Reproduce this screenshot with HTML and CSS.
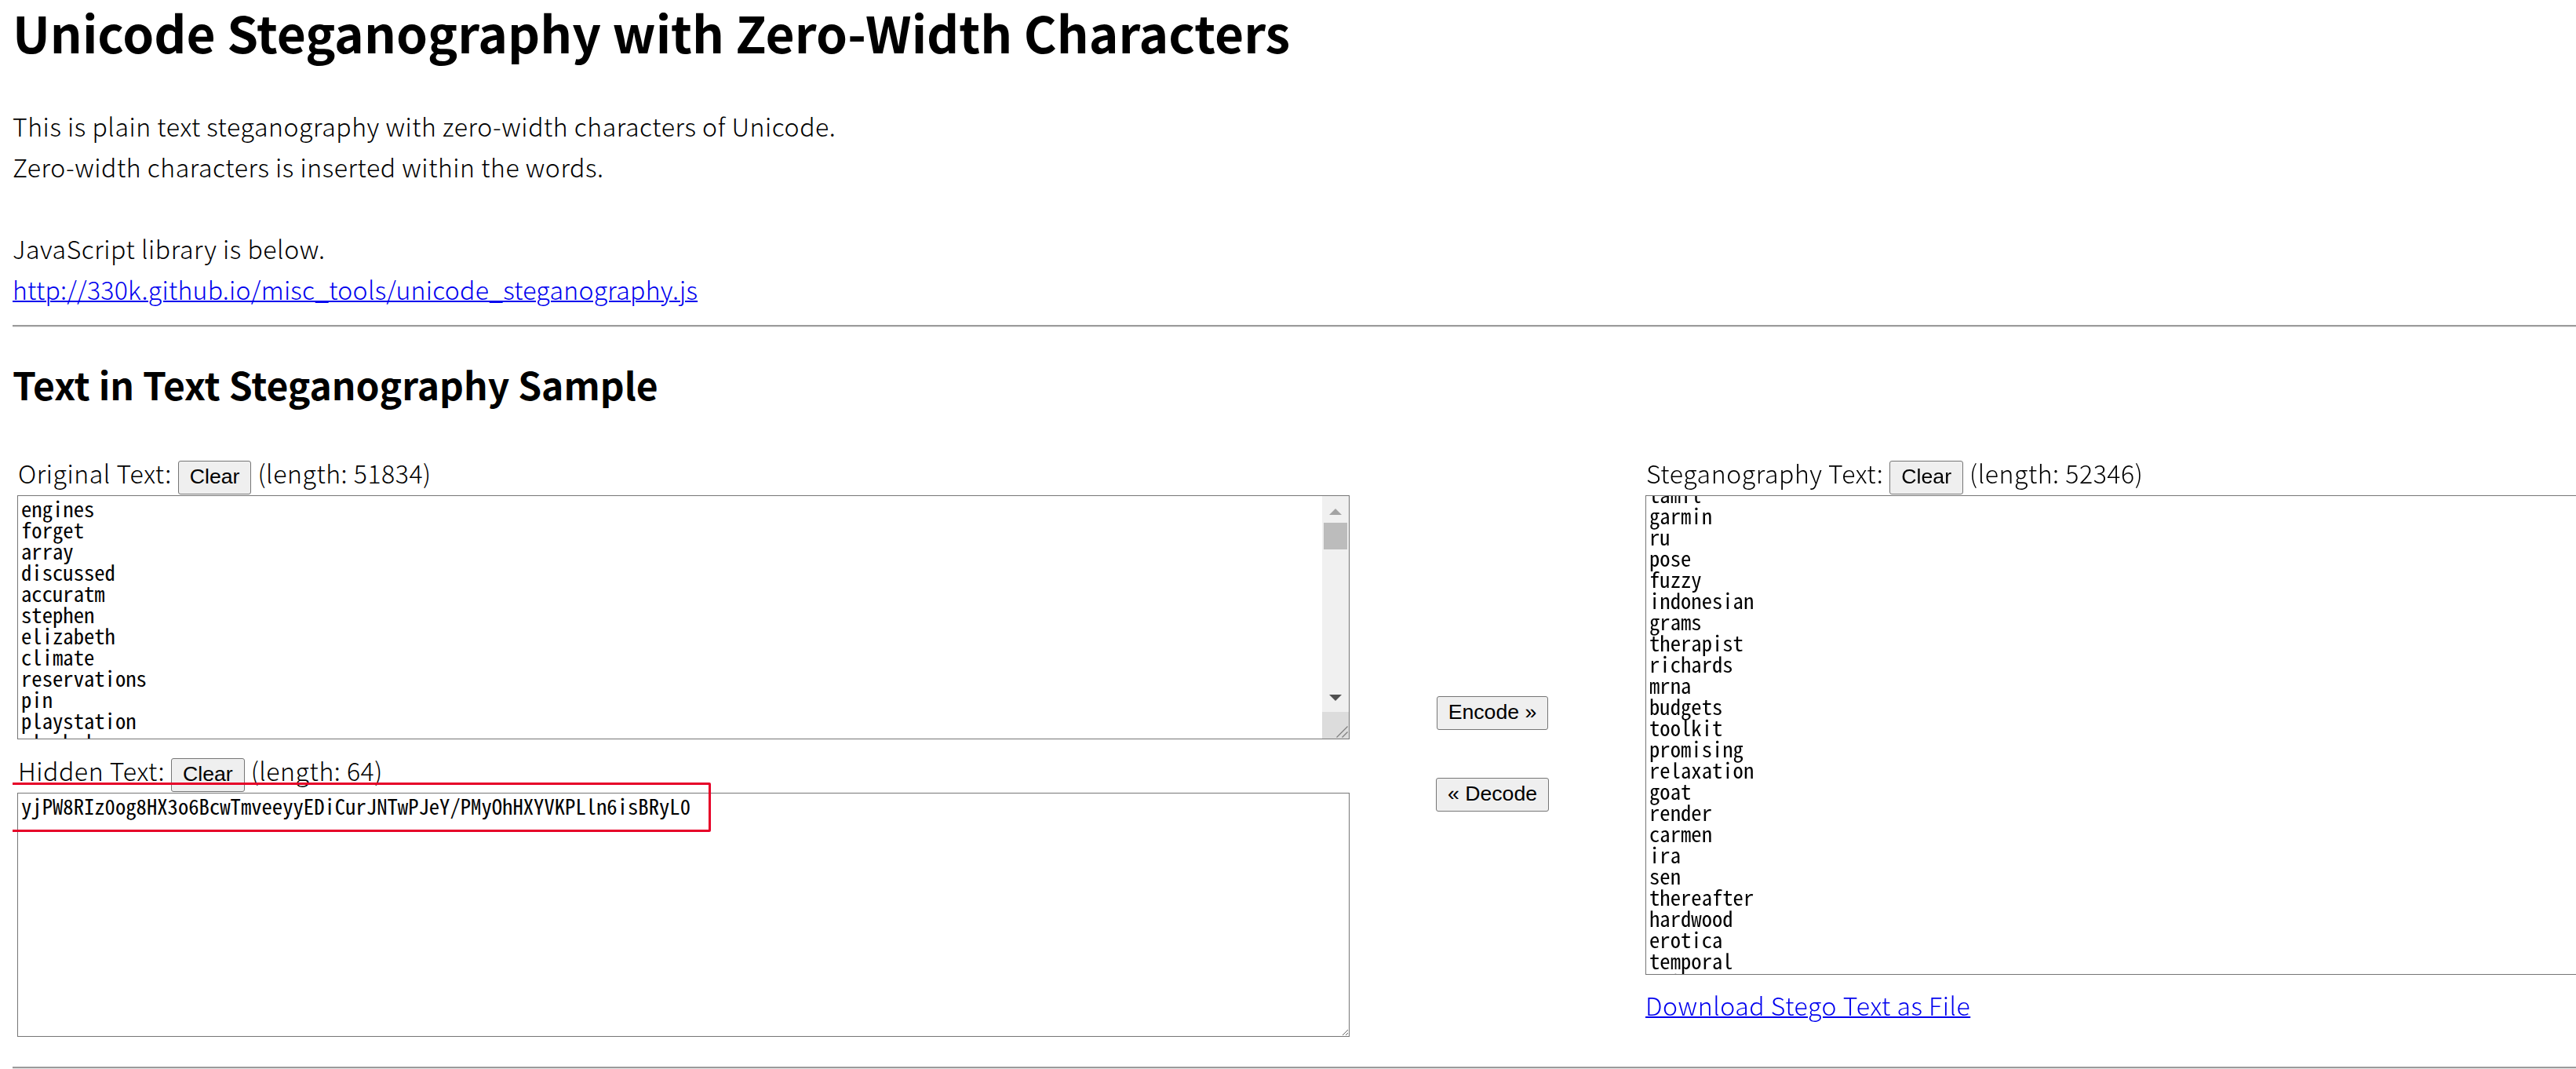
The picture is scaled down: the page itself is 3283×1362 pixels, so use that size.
FILE: index.html
```html
<!DOCTYPE html>
<html lang="en">
<head>
<meta charset="utf-8">
<title>Unicode Steganography with Zero-Width Characters</title>
<link rel="stylesheet" href="styles.css">
</head>
<body>
<h1 class="page-title">Unicode Steganography with Zero-Width Characters</h1>
<p class="intro">This is plain text steganography with zero-width characters of Unicode.<br>Zero-width characters is inserted within the words.<br><br>JavaScript library is below.<br><a class="link link-url" href="#">http://330k.github.io/misc_tools/unicode_steganography.js</a></p>
<hr class="rule">
<h2 class="section-title">Text in Text Steganography Sample</h2>
<div class="workspace">
  <div class="col-left">
    <div class="field-head"><span>Original Text:</span><button class="btn" type="button">Clear</button><span>(length: 51834)</span></div>
    <div class="original-wrap">
      <textarea class="ta ta-original" spellcheck="false">
engines
forget
array
discussed
accuratm
stephen
elizabeth
climate
reservations
pin
playstation
alcohol
greek
instruction
managing
annotation
sister
raw
differences
walking
explain
smaller
newest
establish
gnu
happened
expressed
jeff
extent
sharp
ben
lane
paragraph
kill
mathematics
aol
compensation
ce
export
managers
aircraft
modules
sweden
conflict
conducted
versions
employer
occur
percentage
knows
mississippi
describe
concern
backup
requested
citizens
connecticut
heritage
personals
immediate
holding
trouble
spread
coach
kevin
agricultural
expand
supporting
audience</textarea>
      <div class="scrollbar" aria-hidden="true">
        <div class="sb-button sb-up"><span class="sb-arrow sb-arrow-up"></span></div>
        <div class="sb-track"><div class="sb-thumb"></div></div>
        <div class="sb-button sb-down"><span class="sb-arrow sb-arrow-down"></span></div>
        <div class="sb-corner">
          <svg width="34" height="34" viewBox="0 0 34 34"><path d="M32.5 18.5 L18.5 32.5 M32.5 25.5 L25.5 32.5" stroke="#7d7d7d" stroke-width="1.2" fill="none"/></svg>
        </div>
      </div>
    </div>
    <div class="field-head field-head-hidden"><span>Hidden Text:</span><button class="btn" type="button">Clear</button><span>(length: 64)</span></div>
    <div class="hidden-wrap">
      <textarea class="ta ta-hidden" spellcheck="false">yjPW8RIz0og8HX3o6BcwTmveeyyEDiCurJNTwPJeY/PMyOhHXYVKPLln6isBRyL0</textarea>
      <div class="highlight"></div>
    </div>
  </div>
  <div class="col-mid">
    <button class="btn" type="button">Encode »</button>
    <button class="btn" type="button">« Decode</button>
  </div>
  <div class="col-right">
    <div class="field-head"><span>Steganography Text:</span><button class="btn" type="button">Clear</button><span>(length: 52346)</span></div>
    <textarea class="ta ta-stego" spellcheck="false">
tiles
burner
wilson
gothic
casting
shops
valentine
bless
barely
caution
antenna
rows
sweet
stamps
matched
nepal
radical
crystal
vegetable
bills
lender
drama
ranger
summit
bolt
spanish
arcade
rapid
fiber
shadow
tamil
garmin
ru
pose
fuzzy
indonesian
grams
therapist
richards
mrna
budgets
toolkit
promising
relaxation
goat
render
carmen
ira
sen
thereafter
hardwood
erotica
temporal
sail
forge
commissioners
dense
brave
forwarding
awful
nightmare
airplane
reductions
istanbul
impose
organisms
sega
telescope
viewers
asbestos
portsmouth
cdna
meyer
enters
pod
savage
advancement</textarea>
    <a class="link download" href="#">Download Stego Text as File</a>
  </div>
</div>
<hr class="rule rule-bottom">
<script src="app.js"></script>
</body>
</html>
```
FILE: styles.css
```css
html {
  overflow: hidden;
  background: #fff;
}

body {
  margin: 0 16px;
  width: 3800px;
  color: #000;
  font-family: "Noto Sans CJK JP", "Noto Sans", sans-serif;
  font-size: 32px;
  font-weight: 300;
  letter-spacing: 0.55px;
}

.page-title {
  margin: 0;
  font-size: 64px;
  font-weight: 700;
  letter-spacing: 0;
  line-height: 80px;
}

.intro {
  margin: 54px 0 20px;
  line-height: 52px;
}

.link {
  color: #0000ee;
  text-decoration: underline;
  text-decoration-thickness: 2px;
}

.link-url {
  letter-spacing: 0.25px;
}

.rule {
  margin: 0;
  height: 0;
  border: 0;
  border-top: 2px solid #9b9b9b;
  border-bottom: 1px solid #e6e6e6;
}

.rule-bottom {
  margin-top: 38px;
}

.section-title {
  margin: 42px 0 67px;
  font-size: 48px;
  font-weight: 700;
  letter-spacing: 0;
  line-height: 60px;
}

.workspace {
  display: flex;
  align-items: flex-start;
  padding-left: 6px;
}

.col-left {
  width: 1698px;
  flex: none;
}

.col-mid {
  width: 377px;
  flex: none;
  box-sizing: border-box;
  padding: 301px 13px 0 0;
  display: flex;
  flex-direction: column;
  align-items: center;
  gap: 61px;
}

.col-right {
  width: 1698px;
  flex: none;
}

.field-head {
  display: flex;
  align-items: baseline;
  gap: 8px;
  height: 43px;
  line-height: 32px;
  padding-left: 1px;
  white-space: nowrap;
}

.field-head-hidden {
  margin-top: 23px;
}

.btn {
  margin: 0;
  box-sizing: border-box;
  padding: 4px 14px 6px;
  border: 1px solid #767676;
  border-radius: 3px;
  background: #efefef;
  color: #000;
  font-family: "Liberation Sans", Arial, sans-serif;
  font-size: 26.67px;
  font-weight: 400;
  letter-spacing: 0;
  line-height: 31px;
  white-space: nowrap;
}

.ta {
  display: block;
  box-sizing: border-box;
  width: 1698px;
  height: 311px;
  margin: 0;
  padding: 2px 4px;
  border: 1px solid #767676;
  background: #fff;
  color: #000;
  font-family: "Noto Sans Mono CJK JP", "Liberation Mono", monospace;
  font-size: 26.67px;
  font-weight: 400;
  letter-spacing: 0;
  line-height: 27px;
  resize: both;
  outline: none;
}

.ta-original {
  resize: none;
  overflow: hidden;
}

.ta-stego {
  margin-top: 2px;
  height: 611px;
}

.download {
  display: block;
  width: max-content;
  margin-top: 12px;
  line-height: 52px;
}

.original-wrap,
.hidden-wrap {
  position: relative;
  margin-top: 2px;
}

.highlight {
  position: absolute;
  left: -14px;
  top: -13px;
  width: 898px;
  height: 63px;
  box-sizing: border-box;
  border: 3px solid #e60028;
  border-radius: 2px;
  pointer-events: none;
}

/* scrollbar drawn over the right edge of the original text box */
.scrollbar {
  position: absolute;
  top: 1px;
  right: 1px;
  bottom: 1px;
  width: 34px;
  display: flex;
  flex-direction: column;
  background: #f0f0f0;
}

.sb-button {
  height: 34px;
  flex: none;
  position: relative;
}

.sb-track {
  flex: 1;
}

.sb-thumb {
  height: 34px;
  margin: 0 2px;
  background: #bcbcbc;
}

.sb-arrow {
  position: absolute;
  left: 9px;
  width: 0;
  height: 0;
  border-left: 8px solid transparent;
  border-right: 8px solid transparent;
}

.sb-arrow-up {
  top: 16px;
  border-bottom: 8px solid #a3a3a3;
}

.sb-arrow-down {
  top: 12px;
  border-top: 8px solid #505050;
}

.sb-corner {
  height: 34px;
  flex: none;
  background: #dcdcdc;
}

.sb-corner svg {
  display: block;
}
```
FILE: app.js
```js
var stego = document.querySelector('.ta-stego');
if (stego) {
  stego.scrollTop = 27 * 31 - 9;
}
```
